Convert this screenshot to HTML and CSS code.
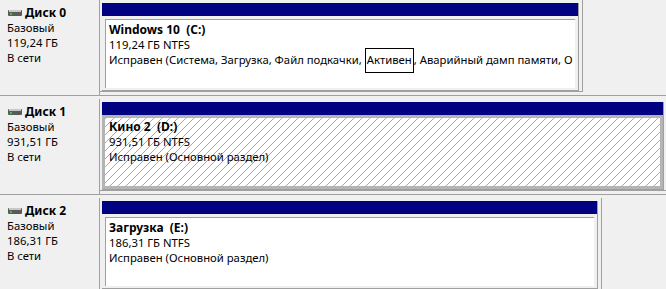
FILE: index.html
```html
<!DOCTYPE html>
<html lang="ru">
<head>
  <meta charset="UTF-8" />
  <title>Управление дисками</title>
  <link rel="stylesheet" href="styles.css">
</head>
<body>

  <div class="disk">
    <div class="label">
      <div class="name">
        <svg class="drive" width="14" height="6" viewBox="0 0 14 6">
          <rect x="0" y="0" width="14" height="6" rx="1" fill="#5a5a5a"/>
          <rect x="1" y="0" width="12" height="2" fill="#c8c8c8"/>
          <rect x="2" y="3" width="2" height="2" fill="#3ec43e"/>
        </svg>Диск 0
      </div>
      <div>Базовый</div>
      <div>119,24 ГБ</div>
      <div>В сети</div>
    </div>
    <div class="area area-c">
      <div class="part">
        <div class="bar"></div>
        <div class="body">
          <div class="title">Windows 10&nbsp; (C:)</div>
          <div>119,24 ГБ NTFS</div>
          <div>Исправен (Система, Загрузка, Файл подкачки, <span class="focus">Активен</span>, Аварийный дамп памяти, О</div>
        </div>
      </div>
    </div>
  </div>

  <div class="disk">
    <div class="label">
      <div class="name">
        <svg class="drive" width="14" height="6" viewBox="0 0 14 6">
          <rect x="0" y="0" width="14" height="6" rx="1" fill="#5a5a5a"/>
          <rect x="1" y="0" width="12" height="2" fill="#c8c8c8"/>
          <rect x="2" y="3" width="2" height="2" fill="#3ec43e"/>
        </svg>Диск 1
      </div>
      <div>Базовый</div>
      <div>931,51 ГБ</div>
      <div>В сети</div>
    </div>
    <div class="area area-d">
      <div class="part">
        <div class="bar"></div>
        <div class="body selected">
          <div class="title">Кино 2&nbsp; (D:)</div>
          <div>931,51 ГБ NTFS</div>
          <div>Исправен (Основной раздел)</div>
        </div>
      </div>
    </div>
  </div>

  <div class="disk">
    <div class="label">
      <div class="name">
        <svg class="drive" width="14" height="6" viewBox="0 0 14 6">
          <rect x="0" y="0" width="14" height="6" rx="1" fill="#5a5a5a"/>
          <rect x="1" y="0" width="12" height="2" fill="#c8c8c8"/>
          <rect x="2" y="3" width="2" height="2" fill="#3ec43e"/>
        </svg>Диск 2
      </div>
      <div>Базовый</div>
      <div>186,31 ГБ</div>
      <div>В сети</div>
    </div>
    <div class="area area-e">
      <div class="part">
        <div class="bar"></div>
        <div class="body">
          <div class="title">Загрузка&nbsp; (E:)</div>
          <div>186,31 ГБ NTFS</div>
          <div>Исправен (Основной раздел)</div>
        </div>
      </div>
    </div>
  </div>

</body>
</html>
```

FILE: styles.css
```css
body {
  margin: 0;
  background: #f0f0f0;
  font-family: "Noto Sans", "Liberation Sans", sans-serif;
  font-size: 11.3px;
  line-height: 15px;
  color: #000;
  overflow: hidden;
}

.disk {
  display: flex;
  height: 95px;
  border-bottom: 1px solid #a0a0a0;
  margin-bottom: 3px;
}

.label {
  box-sizing: border-box;
  width: 100px;
  flex: none;
  padding: 5px 0 0 7px;
  border-right: 1px solid #a0a0a0;
}

.name {
  font-weight: bold;
  font-size: 12px;
  margin-left: 1px;
}

.drive {
  margin-right: 3px;
  vertical-align: 1px;
}

.area {
  box-sizing: border-box;
  flex: none;
  height: 92px;
  padding: 3px 3px 1px 2px;
  border-right: 1px solid #a0a0a0;
  border-bottom: 1px solid #a0a0a0;
}

.area-c { width: 483px; }
.area-d { width: 568px; }
.area-e { width: 502px; }

.part {
  display: flex;
  flex-direction: column;
  height: 100%;
  border-right: 1px solid #a0a0a0;
  border-bottom: 1px solid #a0a0a0;
}

.bar {
  height: 13px;
  flex: none;
  background: #000080;
}

.body {
  flex: 1;
  margin: 3px 3px 2px 3px;
  padding: 2px 3px;
  border-top: 1px solid #a0a0a0;
  border-left: 1px solid #a0a0a0;
  background: #fff;
  white-space: nowrap;
  overflow: hidden;
}

.body.selected {
  margin: 0;
  padding: 1px 4px;
  border: 3px solid #b4b4b4;
  background-color: #fff;
  background-image: repeating-linear-gradient(135deg, #a8a8a8 0, #a8a8a8 1px, transparent 1px, transparent 5.66px);
}

.title {
  font-weight: bold;
  font-size: 12px;
}

.focus {
  border: 1px solid #000;
  padding: 3px 1px 5px 1px;
}
```
